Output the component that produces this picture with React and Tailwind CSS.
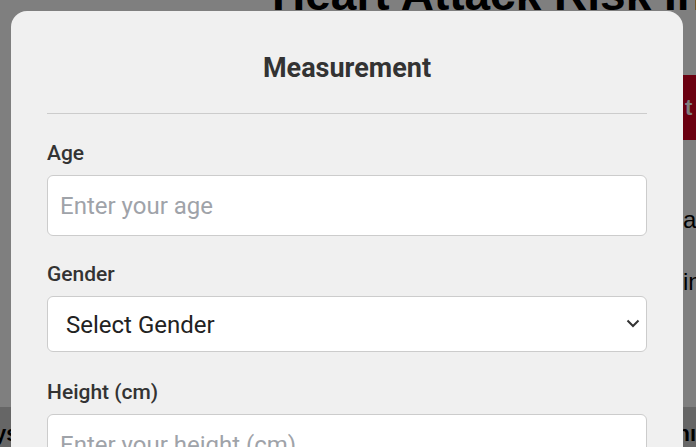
import { useState } from 'react'

function Field({ label, className = '', children }) {
    return <div className={`flex flex-col ${className}`}>
        <label className="mb-2 text-[21px] leading-[27px] font-medium text-[#333]">{label}</label>
        {children}
    </div>
}

function BackgroundPage() {
    return <div className="flex flex-col bg-white text-black font-['Liberation_Sans',sans-serif]">
        <h1 className="-mt-[29px] pl-[272px] text-[46px] leading-none font-bold whitespace-nowrap">
            Heart Attack Risk Indicator
        </h1>
        <div className="mt-[58px] pl-[683px]">
            <button type="button" className="h-[65px] w-[60px] bg-[#d60020] text-left pl-[2px] text-[22px] font-bold text-white">
                t
            </button>
        </div>
        <p className="mt-[66px] pl-[683px] text-[24px] leading-[28px] whitespace-nowrap">as</p>
        <p className="mt-[34px] pl-[683px] text-[24px] leading-[28px] whitespace-nowrap">in</p>
        <div className="mt-[111px] flex h-[60px] bg-[#cccccc] pt-[10px] text-[22px] font-bold whitespace-nowrap">
            <div className="w-[684px] overflow-hidden">
                <span className="-ml-[34px] block">Days</span>
            </div>
            <span>nı</span>
        </div>
    </div>
}

export default function App() {
    const [gender, setGender] = useState('')

    return <div className="relative h-[447px] w-[696px] overflow-hidden bg-white">
        <BackgroundPage />
        <div className="absolute inset-0 bg-black/50"></div>
        <div className="absolute left-[11px] top-[11px] w-[672px] rounded-2xl bg-[#f0f0f0] px-9 pt-[39px] pb-10 font-['Roboto',sans-serif]">
            <h2 className="text-center text-[27px] leading-9 font-bold text-[#333]">Measurement</h2>
            <div className="mt-[27px] border-t border-[#cccccc]"></div>
            <div className="mt-[26px] flex flex-col gap-[25px]">
                <Field label="Age">
                    <input
                        type="number"
                        placeholder="Enter your age"
                        className="h-[61px] w-full rounded-md border border-[#cccccc] bg-white px-3 text-[24px] text-[#222] placeholder:text-[#9fa3a9] outline-none"/>
                </Field>
                <Field label="Gender">
                    <div className="relative">
                        <select
                            value={gender}
                            onChange={e => setGender(e.target.value)}
                            className="h-[56px] w-full appearance-none rounded-md border border-[#cccccc] bg-white pl-[18px] pt-[2px] text-[24px] text-[#222] outline-none">
                            <option value="">Select Gender</option>
                            <option value="male">Male</option>
                            <option value="female">Female</option>
                        </select>
                        <svg className="pointer-events-none absolute right-[7px] top-[23px]" width="14" height="9" viewBox="0 0 14 9" fill="none">
                            <path d="M1.5 1.5l5.5 5.5l5.5-5.5" stroke="#333" strokeWidth="2"/>
                        </svg>
                    </div>
                </Field>
                <Field label="Height (cm)" className="mt-[2px]">
                    <input
                        type="number"
                        placeholder="Enter your height (cm)"
                        className="h-[61px] w-full rounded-md border border-[#cccccc] bg-white px-3 text-[24px] text-[#222] placeholder:text-[#9fa3a9] outline-none"/>
                </Field>
            </div>
        </div>
    </div>
}
